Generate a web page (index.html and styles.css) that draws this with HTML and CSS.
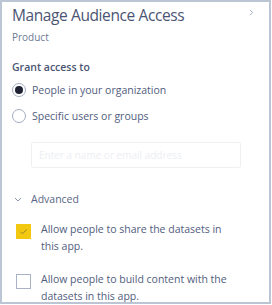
FILE: index.html
```html
<!DOCTYPE html>
<html lang="en">
<head>
  <meta charset="UTF-8">
  <meta name="viewport" content="width=device-width, initial-scale=1.0">
  <title>Manage Audience Access</title>
  <link rel="stylesheet" href="styles.css">
</head>
<body>
  <div class="panel">
    <div class="header">
      <h1>Manage Audience Access</h1>
      <svg class="close" width="5" height="7" viewBox="0 0 5 7"><path d="M1 0.8l2.6 2.7L1 6.2" fill="none" stroke="#a3aec3" stroke-width="1"/></svg>
    </div>
    <div class="subtitle">Product</div>

    <div class="section-label">Grant access to</div>
    <label class="radio-row">
      <span class="radio checked"></span>
      <span>People in your organization</span>
    </label>
    <label class="radio-row">
      <span class="radio"></span>
      <span>Specific users or groups</span>
    </label>

    <div class="search">Enter a name or email address</div>

    <div class="advanced">
      <svg width="8" height="5" viewBox="0 0 8 5"><path d="M1 1l3 3 3-3" fill="none" stroke="#8896b0" stroke-width="1"/></svg>
      <span>Advanced</span>
    </div>

    <label class="check-row">
      <span class="box on">
        <svg width="9" height="7" viewBox="0 0 9 7"><path d="M1.5 3.8l2 2 4-4.3" fill="none" stroke="#9a8628" stroke-width="1"/></svg>
      </span>
      <span class="check-text">Allow people to share the datasets in this app.</span>
    </label>
    <label class="check-row">
      <span class="box"></span>
      <span class="check-text">Allow people to build content with the datasets in this app.</span>
    </label>
  </div>
</body>
</html>
```

FILE: styles.css
```css
body {
  margin: 0;
  font-family: "Open Sans", "Noto Sans", sans-serif;
  background: #fff;
}
.panel {
  box-sizing: border-box;
  width: 271px;
  height: 304px;
  border: 2px solid #bcc5d4;
  padding: 3px 0 0 10px;
  overflow: hidden;
  color: #515d7d;
}
.header {
  display: flex;
  justify-content: space-between;
  align-items: center;
  padding-right: 15px;
}
h1 {
  margin: 0;
  font-size: 15.5px;
  font-weight: 400;
  letter-spacing: -0.4px;
  color: #4b5573;
  line-height: 20px;
}
.close {
  margin-top: -5px;
}
.subtitle {
  font-size: 10px;
  color: #6c7996;
  margin-top: 5px;
  line-height: 14px;
}
.section-label {
  margin-top: 16px;
  font-size: 10.5px;
  font-weight: 600;
  color: #4a5572;
  line-height: 14px;
}
.radio-row {
  display: flex;
  align-items: center;
  gap: 6px;
  font-size: 10.5px;
  line-height: 14px;
  margin-top: 9px;
}
.radio-row + .radio-row {
  margin-top: 12px;
}
.radio {
  box-sizing: border-box;
  width: 14px;
  height: 14px;
  border: 1px solid #a3adc1;
  border-radius: 50%;
  display: flex;
  align-items: center;
  justify-content: center;
}
.radio.checked::after {
  content: "";
  width: 8px;
  height: 8px;
  border-radius: 50%;
  background: #1f2233;
}
.search {
  box-sizing: border-box;
  margin: 19px 0 0 19px;
  width: 210px;
  height: 26px;
  border: 1px solid #eef0f4;
  border-radius: 2px;
  padding: 0 7px;
  font-size: 10px;
  line-height: 24px;
  color: #eceef3;
}
.advanced {
  display: flex;
  align-items: center;
  gap: 9px;
  margin-top: 23px;
  padding-left: 2px;
  font-size: 10.5px;
  line-height: 16px;
  color: #5a6684;
}
.check-row {
  display: flex;
  align-items: flex-start;
  gap: 10px;
  padding-left: 4px;
  margin-top: 14px;
  font-size: 10.5px;
  line-height: 16.5px;
}
.check-row + .check-row {
  margin-top: 17px;
}
.check-text {
  width: 186px;
}
.box {
  box-sizing: border-box;
  flex: none;
  width: 15px;
  height: 15px;
  margin-top: 3px;
  border: 1px solid #aab3c6;
  display: flex;
  align-items: center;
  justify-content: center;
}
.box.on {
  background: #f2c811;
  border-color: #f2c811;
}
```
